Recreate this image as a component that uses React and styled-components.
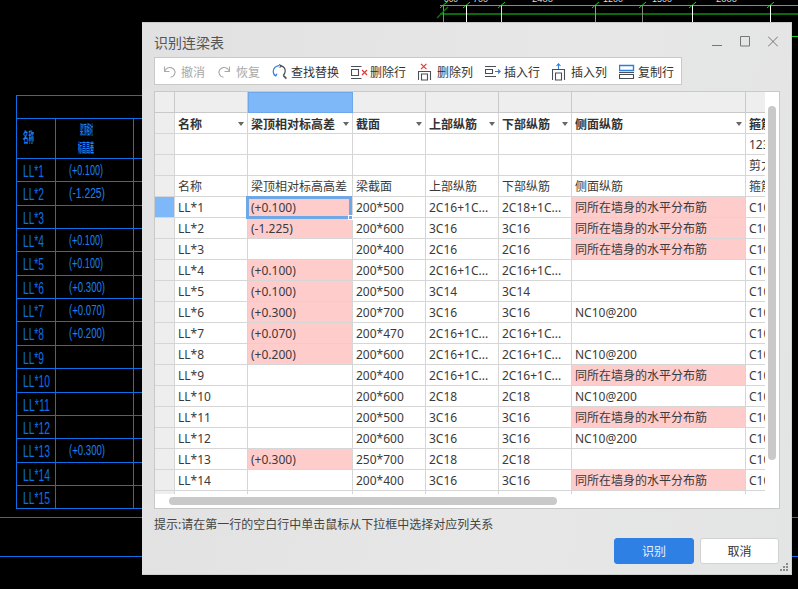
import React from 'react';
import styled, { createGlobalStyle, css } from 'styled-components';

const Global = createGlobalStyle`
  html, body { margin: 0; padding: 0; background: #000; overflow: hidden; }
  body { font-family: "Noto Sans", "Noto Sans CJK SC", sans-serif; font-size: 12px; color: #333; }
`;

const Desktop = styled.div`
  position: relative;
  width: 798px;
  height: 589px;
  background: #000;
  overflow: hidden;
`;

const CadCanvas = styled.svg`
  position: absolute;
  left: 0;
  top: 0;
  width: 798px;
  height: 589px;
`;

const CadText = styled.text`
  font-family: "Liberation Sans", "Noto Sans CJK SC", sans-serif;
  font-size: ${p => p.$size || 17}px;
  font-weight: ${p => (p.$bold ? 700 : 400)};
  fill: ${p => p.$fill || '#0d6fe6'};
`;

const Window = styled.section`
  position: absolute;
  left: 142px;
  top: 22px;
  width: 650px;
  height: 553px;
  box-sizing: border-box;
  padding: 0 12px;
  display: flex;
  flex-direction: column;
  background: linear-gradient(100deg, #e1e1e1, #e6e7e6 60%, #e3e4e4);
  border-top: 1px solid #c9c9c9;
  border-right: 1px solid #cfcfcf;
  border-bottom: 1px solid #cfcfcf;
`;

const TitleBar = styled.header`
  height: 34px;
  display: flex;
  align-items: center;
  justify-content: space-between;
  padding-top: 4px;
  box-sizing: border-box;
`;

const Title = styled.h1`
  margin: 0;
  font-size: 14px;
  font-weight: 400;
  color: #555;
`;

const WindowControls = styled.div`
  display: flex;
  gap: 18px;
  margin-right: 1px;
  margin-bottom: 1px;
  svg { display: block; }
`;

const Toolbar = styled.nav`
  width: 528px;
  height: 28px;
  box-sizing: border-box;
  display: flex;
  align-items: center;
  gap: 12px;
  padding: 1px 0 0 7px;
  background: #fff;
  border: 1px solid #c9c9c9;
`;

const Tool = styled.div`
  display: flex;
  align-items: center;
  color: ${p => (p.$disabled ? '#a8a8a8' : '#333')};
  svg { display: block; flex: none; }
`;

const TablePanel = styled.div`
  margin-top: 6px;
  width: 626px;
  height: 418px;
  box-sizing: border-box;
  display: grid;
  grid-template-columns: 610px 1fr;
  grid-template-rows: 402px 1fr;
  background: #fff;
  border: 1px solid #c9c9c9;
`;

const Viewport = styled.div`
  overflow: hidden;
`;

const columns = '20px 73px 105px 73px 73px 73px 174px 100px';

const Row = styled.div`
  display: grid;
  grid-template-columns: ${columns};
  height: 21px;
`;

const Cell = styled.div`
  position: relative;
  box-sizing: border-box;
  height: 21px;
  display: flex;
  align-items: center;
  justify-content: space-between;
  padding: 0 3px;
  white-space: nowrap;
  overflow: visible;
  border-right: 1px solid #d6d6d6;
  border-bottom: 1px solid #d6d6d6;
  background: ${p => (p.$pink ? '#ffcccc' : '#fff')};
  color: #3a3a3a;
  ${p => p.$bold && css`font-weight: 700; color: #333; padding-top: 1px;`}
`;

const HeadCell = styled(Cell)`
  background: ${p => (p.$active ? '#7eb8f8' : '#eeeeee')};
  border-color: ${p => (p.$active ? '#6ea8ea' : '#c9c9c9')};
  ${p => p.$active && css`border-top: 1px solid #6ea8ea; border-left: 1px solid #6ea8ea;`}
`;

const Gutter = styled(Cell)`
  background: ${p => (p.$active ? '#7eb8f8' : '#eeeeee')};
`;

const Caret = styled.i`
  flex: none;
  width: 0;
  height: 0;
  border-left: 3px solid transparent;
  border-right: 3px solid transparent;
  border-top: 4px solid #666;
`;

const Selection = styled.span`
  position: absolute;
  left: -2px;
  top: -1px;
  width: 106px;
  height: 23px;
  box-sizing: border-box;
  border: 3px solid #6ea8e6;
  pointer-events: none;
  z-index: 2;
  &::after {
    content: '';
    position: absolute;
    right: -4px;
    bottom: -4px;
    width: 5px;
    height: 5px;
    background: #6ea8e6;
    border: 1px solid #fff;
    box-sizing: border-box;
  }
`;

const VTrack = styled.div`
  grid-row: 1 / span 2;
  grid-column: 2;
  padding: 14px 2px 0 3px;
`;

const VThumb = styled.div`
  width: 8px;
  height: 354px;
  border-radius: 4px;
  background: #c9c9c9;
`;

const HThumb = styled.div`
  margin: 3px 0 0 14px;
  width: 388px;
  height: 8px;
  border-radius: 4px;
  background: #c9c9c9;
`;

const Hint = styled.p`
  margin: 7px 0 0;
  line-height: 17px;
  color: #444;
`;

const Footer = styled.footer`
  margin-top: 5px;
  width: 625px;
  display: flex;
  justify-content: flex-end;
  gap: 6px;
`;

const Button = styled.button`
  width: ${p => (p.$primary ? 80 : 79)}px;
  height: 26px;
  padding: 0;
  box-sizing: border-box;
  border-radius: 3px;
  font: inherit;
  color: ${p => (p.$primary ? '#e8f1ff' : '#333')};
  background: ${p => (p.$primary ? '#2f80e4' : '#fff')};
  border: 1px solid ${p => (p.$primary ? '#2f80e4' : '#d2d2d2')};
`;

const Grip = styled.svg`
  position: absolute;
  right: 2px;
  bottom: 2px;
`;

const dark = '#4a4f57';
const blue = '#2b7de0';
const red = '#e53935';

const Icons = {
  undo: (
    <svg width="19" height="16" viewBox="0 0 19 16" fill="none" stroke="#aaa" strokeWidth="1.1">
      <path d="M2.5 2.5V7.5H7.5" />
      <path d="M2.5 7.5C4 4.5 6.5 3 9 3.6C12 4.3 13.6 7 12.8 9.6C12.2 11.6 10.5 13 8.5 13.2" />
    </svg>
  ),
  redo: (
    <svg width="19" height="16" viewBox="0 0 19 16" fill="none" stroke="#aaa" strokeWidth="1.1">
      <path d="M12.5 2.5V7.5H7.5" />
      <path d="M12.5 7.5C11 4.5 8.5 3 6 3.6C3 4.3 1.4 7 2.2 9.6C2.8 11.6 4.5 13 6.5 13.2" />
    </svg>
  ),
  find: (
    <svg width="19" height="16" viewBox="0 0 19 16" fill="none" strokeWidth="1.2">
      <path d="M7 1.6C3.5 2 1 4.6 1.2 7.6C1.3 9.4 2.2 10.8 3.6 11.6" stroke={blue} />
      <path d="M1.6 10.4L3.8 11.9L5 9.8" stroke={blue} />
      <path d="M9 1.8C11.8 2.5 13.4 4.6 13.2 7.4C13.1 9.2 12.2 10.6 11 11.4" stroke={dark} />
      <path d="M7.2 0.6L9.2 1.9L7.6 3.6" stroke={dark} />
      <path d="M11.4 11.6L14.4 14.6" stroke={dark} strokeWidth="1.5" />
    </svg>
  ),
  deleteRow: (
    <svg width="19" height="16" viewBox="0 0 19 16" fill="none" strokeWidth="1.1">
      <path d="M0 2.5H10.5M0 14.5H10.5" stroke={dark} />
      <path d="M0.5 5.5H7.5V11.5H0.5Z" stroke={dark} />
      <path d="M11 6L16 11M16 6L11 11" stroke={red} strokeWidth="1.2" />
    </svg>
  ),
  deleteCol: (
    <svg width="19" height="18" viewBox="0 0 19 18" fill="none" strokeWidth="1.1">
      <path d="M3 0.8L8.4 6.2M8.4 0.8L3 6.2" stroke={red} strokeWidth="1.2" />
      <path d="M0.5 17V8.5H12.5V17" stroke={dark} />
      <path d="M3.5 17V11H9.5V17H3.5Z" stroke={dark} />
    </svg>
  ),
  insertRow: (
    <svg width="19" height="16" viewBox="0 0 19 16" fill="none" strokeWidth="1.1">
      <path d="M0 2.5H11M0 12.5H11" stroke={dark} />
      <path d="M0.5 5.5H7.5V9.5H0.5Z" stroke={dark} />
      <path d="M10 7.5H15M13 5.5L15.2 7.5L13 9.5" stroke={blue} />
    </svg>
  ),
  insertCol: (
    <svg width="19" height="18" viewBox="0 0 19 18" fill="none" strokeWidth="1.1">
      <path d="M6.5 6V1M4.5 3L6.5 0.8L8.5 3" stroke={blue} />
      <path d="M0.5 17V6.5H12.5V17" stroke={dark} />
      <path d="M3.5 17V10H9.5V17H3.5Z" stroke={dark} />
    </svg>
  ),
  copyRow: (
    <svg width="19" height="16" viewBox="0 0 19 16" fill="none" strokeWidth="1.1">
      <path d="M0.5 1.5H14.5V6.5H0.5Z" stroke={blue} strokeWidth="1.4" />
      <path d="M0 8.5H15" stroke={dark} />
      <path d="M0.5 10.5H14.5V14.5H0.5Z" stroke={dark} />
    </svg>
  ),
};

const tools = [
  ['undo', '撤消', true],
  ['redo', '恢复', true],
  ['find', '查找替换'],
  ['deleteRow', '删除行'],
  ['deleteCol', '删除列'],
  ['insertRow', '插入行'],
  ['insertCol', '插入列'],
  ['copyRow', '复制行'],
];

const side = '同所在墙身的水平分布筋';
const mix = '2C16+1C...';
const rows = [
  ['LL*1', '(+0.100)', '200*500', mix, '2C18+1C...', side],
  ['LL*2', '(-1.225)', '200*600', '3C16', '3C16', side],
  ['LL*3', '', '200*400', '2C16', '2C16', side],
  ['LL*4', '(+0.100)', '200*500', mix, mix, ''],
  ['LL*5', '(+0.100)', '200*500', '3C14', '3C14', ''],
  ['LL*6', '(+0.300)', '200*700', '3C16', '3C16', 'NC10@200'],
  ['LL*7', '(+0.070)', '200*470', mix, mix, ''],
  ['LL*8', '(+0.200)', '200*600', mix, mix, 'NC10@200'],
  ['LL*9', '', '200*400', mix, mix, side],
  ['LL*10', '', '200*600', '2C18', '2C18', 'NC10@200'],
  ['LL*11', '', '200*500', '3C16', '3C16', side],
  ['LL*12', '', '200*600', '3C16', '3C16', 'NC10@200'],
  ['LL*13', '(+0.300)', '250*700', '2C18', '2C18', ''],
  ['LL*14', '', '200*400', '3C16', '3C16', side],
  ['LL*15', '', '', '', '', ''],
];

const headers = ['名称', '梁顶相对标高差', '截面', '上部纵筋', '下部纵筋', '侧面纵筋', '箍筋'];
const labels = ['名称', '梁顶相对标高高差', '梁截面', '上部纵筋', '下部纵筋', '侧面纵筋', '箍筋'];

const cadRowY = [158, 181, 205, 228, 251, 275, 298, 321, 345, 368, 392, 415, 438, 462, 485, 508];
const cadValues = { 0: '(+0.100)', 1: '(-1.225)', 3: '(+0.100)', 4: '(+0.100)', 5: '(+0.300)', 6: '(+0.070)', 7: '(+0.200)', 12: '(+0.300)' };
const ticks = [
  [443, '#19d419'], [466, '#fff'], [501, '#ddd'], [595, '#999'], [642, '#888'], [692, '#fff'], [770, '#fff'],
];
const dims = [[444, 14, '800'], [473, 15, '700'], [532, 21, '2400'], [603, 20, '1200'], [652, 20, '1500'], [716, 21, '2000']];

function CadDrawing() {
  return (
    <CadCanvas viewBox="0 0 798 589">
      <g stroke="#0d6fe6" strokeWidth="1" fill="none" shapeRendering="crispEdges">
        <path d="M16 95.5H142M16 118.5H142" />
        <path d="M16.5 95V509M55.5 118V509M133.5 118V509" />
        {cadRowY.map(y => <path key={y} d={`M16 ${y + 0.5}H142`} />)}
        <path d="M0 517.5H798M0 556.5H798" />
      </g>
      <CadText x="23" y="142" $size={14} $bold $fill="#1a80f0" textLength="11" lengthAdjust="spacingAndGlyphs">名称</CadText>
      <CadText x="80" y="134" $size={13} $bold $fill="#1a80f0" textLength="13" lengthAdjust="spacingAndGlyphs">梁顶相对</CadText>
      <CadText x="78" y="152" $size={13} $bold $fill="#1a80f0" textLength="16" lengthAdjust="spacingAndGlyphs">标高高差</CadText>
      {rows.map((r, i) => {
        const n = r[0].length - 3;
        return (
          <CadText key={r[0]} x="23" y={177 + i * 23.35} textLength={n > 1 ? 27 : 21} lengthAdjust="spacingAndGlyphs">{r[0]}</CadText>
        );
      })}
      {Object.entries(cadValues).map(([i, v]) => (
        <CadText key={i} x="69" y={175 + i * 23.35} $size={15} $fill="#1a80f0" textLength={v === '(+0.100)' ? 34 : 36} lengthAdjust="spacingAndGlyphs">{v}</CadText>
      ))}
      <g shapeRendering="crispEdges">
        <path d="M440 5.5H798" stroke="#19d419" />
        <path d="M440 13.5H798" stroke="#0b6a0b" strokeWidth="2" />
        <path d="M791 36.5H798" stroke="#19d419" />
        {ticks.map(([x, c]) => <path key={x} d={`M${x}.5 5V22`} stroke={c} />)}
      </g>
      <path d="M437 18L448 7" stroke="#0b7a0b" strokeWidth="1.2" />
      {ticks.map(([x]) => <path key={x} d={`M${x - 3} 8L${x + 4} 2`} stroke="#19d419" />)}
      {dims.map(([x, w, t]) => (
        <CadText key={t} x={x} y="2" $size={9} $fill="#ddd" textLength={w} lengthAdjust="spacingAndGlyphs">{t}</CadText>
      ))}
    </CadCanvas>
  );
}

export default function App() {
  return (
    <Desktop>
      <Global />
      <CadDrawing />
      <Window>
        <TitleBar>
          <Title>识别连梁表</Title>
          <WindowControls>
            <svg width="10" height="11" viewBox="0 0 10 11" stroke="#777" fill="none"><path d="M0 9.5H10" /></svg>
            <svg width="10" height="11" viewBox="0 0 10 11" stroke="#777" fill="none"><path d="M0.5 0.5H9.5V10H0.5Z" /></svg>
            <svg width="10" height="11" viewBox="0 0 10 11" stroke="#777" fill="none"><path d="M0 0.5L10 10.5M10 0.5L0 10.5" /></svg>
          </WindowControls>
        </TitleBar>
        <Toolbar>
          {tools.map(([icon, label, disabled]) => (
            <Tool key={label} $disabled={disabled}>
              {Icons[icon]}
              <span>{label}</span>
            </Tool>
          ))}
        </Toolbar>
        <TablePanel>
          <Viewport>
            <Row>
              <HeadCell />
              {headers.map((h, i) => <HeadCell key={h} $active={i === 1} />)}
            </Row>
            <Row>
              <Gutter />
              {headers.map((h, i) => (
                <Cell key={h} $bold>
                  <span>{h}</span>
                  {i < 6 && <Caret />}
                </Cell>
              ))}
            </Row>
            <Row>
              <Gutter />
              <Cell /><Cell /><Cell /><Cell /><Cell /><Cell />
              <Cell>123</Cell>
            </Row>
            <Row>
              <Gutter />
              <Cell /><Cell /><Cell /><Cell /><Cell /><Cell />
              <Cell>剪力墙</Cell>
            </Row>
            <Row>
              <Gutter />
              {labels.map(l => <Cell key={l}>{l}</Cell>)}
            </Row>
            {rows.map((r, i) => (
              <Row key={r[0]}>
                <Gutter $active={i === 0} />
                <Cell>{r[0]}</Cell>
                <Cell $pink={!!r[1]}>
                  {r[1]}
                  {i === 0 && <Selection />}
                </Cell>
                <Cell>{r[2]}</Cell>
                <Cell>{r[3]}</Cell>
                <Cell>{r[4]}</Cell>
                <Cell $pink={r[5] === side}>{r[5]}</Cell>
                <Cell>{i < 14 ? 'C10@200' : ''}</Cell>
              </Row>
            ))}
          </Viewport>
          <VTrack><VThumb /></VTrack>
          <HThumb />
        </TablePanel>
        <Hint>提示:请在第一行的空白行中单击鼠标从下拉框中选择对应列关系</Hint>
        <Footer>
          <Button $primary>识别</Button>
          <Button>取消</Button>
        </Footer>
        <Grip width="9" height="9" viewBox="0 0 9 9" fill="#8a8a8a">
          <rect x="6" y="0" width="2" height="2" />
          <rect x="3" y="3" width="2" height="2" />
          <rect x="6" y="3" width="2" height="2" />
          <rect x="0" y="6" width="2" height="2" />
          <rect x="3" y="6" width="2" height="2" />
          <rect x="6" y="6" width="2" height="2" />
        </Grip>
      </Window>
    </Desktop>
  );
}
